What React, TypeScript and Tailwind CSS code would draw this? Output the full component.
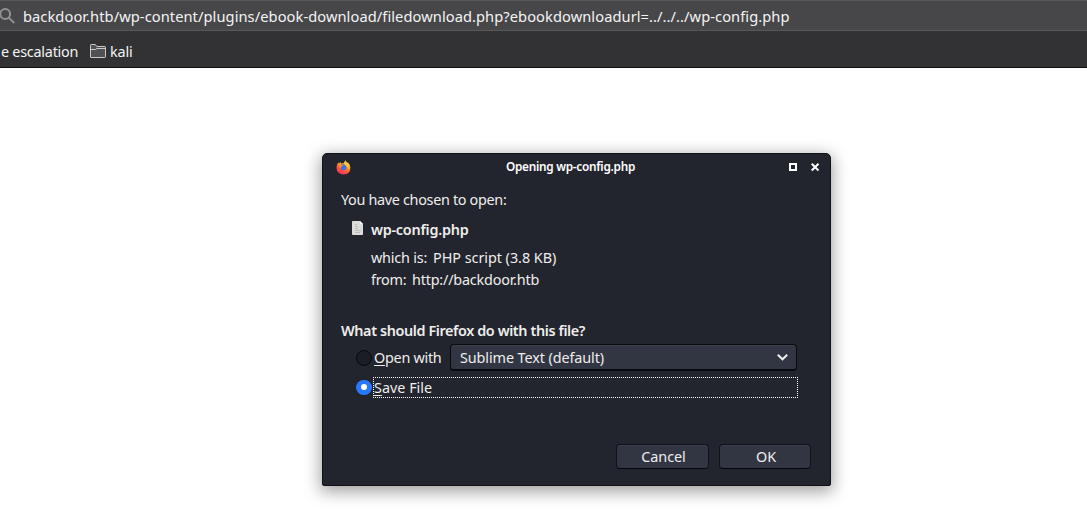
import type { ReactNode } from 'react';

function SearchIcon() {
  return (
    <svg className="-ml-[2px] mt-px block h-[18px] w-[18px] shrink-0" viewBox="0 0 18 18" fill="none" stroke="#929294" strokeWidth="2">
      <circle cx="7.2" cy="7" r="4.9" />
      <path d="M10.8 10.6L16.3 16.1" />
    </svg>
  );
}

function FolderIcon() {
  return (
    <svg className="block h-[14px] w-4 shrink-0" viewBox="0 0 16 14" fill="none" stroke="#c9c9ca">
      <path d="M.5 13V1.2Q.5.5 1.2.5H5.3L6.8 2.5H14.8Q15.5 2.5 15.5 3.2V12.8Q15.5 13.5 14.8 13.5H1Q.5 13.5.5 13Z" fill="#515153" />
      <path d="M.5 5.5H5.5L7 4.5H15.5" />
    </svg>
  );
}

function FirefoxIcon() {
  return (
    <svg className="-mt-px block h-[15px] w-[15px]" viewBox="0 0 15 15">
      <defs>
        <linearGradient id="flame" x1="0.8" y1="0" x2="0.25" y2="1">
          <stop offset="0" stopColor="#fff044" />
          <stop offset="0.35" stopColor="#ffad28" />
          <stop offset="0.65" stopColor="#ff583c" />
          <stop offset="1" stopColor="#ed2864" />
        </linearGradient>
      </defs>
      <path d="M1.2 4.4L2 2.4L3.1 3.6L4.5 1.9L5.2 3.5L8.1 3.1L9.2.3Q10.3 2 11.8 3L12.3 2.7Q14.6 5.2 14.4 8Q14 14.2 7.5 14.6Q1 14.2.5 8.2Q.4 6 1.2 4.4Z" fill="url(#flame)" />
      <path d="M4.5 4.1L7.8 4.2Q10.4 5 10.5 7.5Q10.2 10.2 7.4 10.3Q4.8 10.1 4.4 7.7Z" fill="#3f72dc" />
      <path d="M2.4 5Q4.7 3.4 7.4 5.3L5.8 6.6Q4.7 7 4.8 8.3Q3.2 7.7 2.4 5Z" fill="#ff8a34" />
      <path d="M8.2 4.2L9 1Q12.8 4 11.8 7.8Q10.7 4.9 8.2 4.2Z" fill="#ffc43a" />
    </svg>
  );
}

function FileIcon() {
  return (
    <svg className="block h-[14px] w-[11px] shrink-0" viewBox="0 0 11 14">
      <path d="M0 .7Q0 0 .7 0H8L11 3V13.2Q11 14 10.2 14H.8Q0 14 0 13.2Z" fill="#dcdcdc" />
      <path d="M8 0L11 3H8Z" fill="#fff" />
      <path d="M3 3.5H5M3 5.5H6M3 7.5H6M3 9.5H9M3 11.5H8" stroke="#bdbdbd" />
    </svg>
  );
}

function Button({ children, className }: { children: ReactNode; className: string }) {
  return (
    <button className={`h-[25px] rounded-[4px] border border-b-[#050608] border-[#101218] bg-[#323643] pl-[2px] leading-[23px] shadow-[inset_0_1px_0_#3c404d] ${className}`}>
      {children}
    </button>
  );
}

export default function App() {
  return (
    <div className="h-[516px] w-[1087px] overflow-hidden bg-white font-['Noto_Sans',sans-serif] text-[14.67px] text-[#eeeeec]">
      <header className="h-[68px] border-b border-[#0c0c0d] bg-[#323234] text-[#f4f4f5]">
        <div className="flex h-[31px] items-center border-t border-b border-[#59595b] bg-[#474749]">
          <SearchIcon />
          <span className="ml-[7px] whitespace-nowrap leading-5 tracking-[0.068px]">
            backdoor.htb/wp-content/plugins/ebook-download/filedownload.php?ebookdownloadurl=../../../wp-config.php
          </span>
        </div>
        <nav className="flex h-9 items-center pt-1 text-[14.4px] leading-[22px]">
          <span className="w-[77px] pt-[2px] pl-px tracking-[-0.25px] whitespace-nowrap">e escalation</span>
          <span className="ml-[13px] flex items-center gap-1 tracking-[-0.15px]">
            <FolderIcon />
            <span className="pt-[2px]">kali</span>
          </span>
        </nav>
      </header>

      <main className="pt-[85px] pl-[322px]">
        <section className="h-[333px] w-[509px] rounded-t-[5px] rounded-b-[2px] border border-[#10121a] bg-[#23252e] shadow-[0_4px_16px_2px_rgba(0,0,0,0.36)]">
          <div className="grid h-[26px] grid-cols-[80px_1fr_80px] items-center pt-px">
            <div className="pl-[13px]">
              <FirefoxIcon />
            </div>
            <h1 className="-mt-[2.5px] pr-[12px] text-center text-[11.8px] leading-4 font-semibold tracking-[-0.27px] text-white">Opening wp-config.php</h1>
            <div className="flex items-start justify-end gap-[14px] pr-[10px]">
              <svg className="block h-2 w-2" viewBox="0 0 8 8" fill="none" stroke="#fff" strokeWidth="2">
                <path d="M1 1H7V7H1Z" />
              </svg>
              <svg className="block h-[9px] w-[9px]" viewBox="0 0 9 9" fill="none" stroke="#fff" strokeWidth="2">
                <path d="M.7.7L7.5 7.5M7.5.7L.7 7.5" />
              </svg>
            </div>
          </div>

          <div className="pr-[19px] pl-[18px] text-[14.4px] leading-5">
            <p className="mt-[10px] tracking-[-0.32px]">You have chosen to open:</p>
            <div className="mt-[10px] flex items-center pl-[11px]">
              <div className="-mt-[4px]">
                <FileIcon />
              </div>
              <strong className="ml-2 font-semibold tracking-[-0.23px]">wp-config.php</strong>
            </div>
            <div className="mt-2 ml-[30px] flex">
              <span className="w-[62px] tracking-[-0.2px]">which is:</span>
              <span className="tracking-[-0.04px]">PHP script (3.8 KB)</span>
            </div>
            <div className="mt-[2px] ml-[30px] flex">
              <span className="w-[41px] tracking-[-0.26px]">from:</span>
              <span className="tracking-[-0.2px]">http://backdoor.htb</span>
            </div>
            <p className="mt-[31px] font-semibold tracking-[-0.39px]">What should Firefox do with this file?</p>

            <div className="mt-[3px] flex h-[27px] items-center pl-[15px]">
              <span className="h-4 w-4 shrink-0 rounded-full border border-[#08090c] bg-[#1b1d24]" />
              <span className="ml-[2px] w-[76px] pt-px tracking-[-0.28px]">
                <span className="underline decoration-1 underline-offset-2">O</span>pen with
              </span>
              <div className="flex h-[27px] w-[347px] shrink-0 items-center justify-between rounded-[4px] border border-b-2 border-[#090a0e] bg-[#323643] pr-[8.5px] pl-[9px] shadow-[inset_0_1px_0_#3c404d]">
                <span className="pt-[2px] tracking-[-0.1px]">Sublime Text (default)</span>
                <svg className="block h-[7px] w-[11px]" viewBox="0 0 11 7" fill="none" stroke="#eeeeec" strokeWidth="2">
                  <path d="M.8.8L5.5 5.3L10.2.8" />
                </svg>
              </div>
            </div>

            <div className="mt-[6px] flex h-[21px] items-center pl-[15px]">
              <span className="-mt-px flex h-[15px] w-[16px] shrink-0 items-center justify-center rounded-full bg-[#2777ff]">
                <span className="h-[6px] w-[6px] rounded-full bg-white" />
              </span>
              <span className="ml-px flex h-[21px] w-[425px] shrink-0 items-center border border-dotted border-white">
                <span>
                  <span className="underline decoration-1 underline-offset-2">S</span>ave File
                </span>
              </span>
            </div>

            <div className="mt-[46px] flex justify-end gap-[10px]">
              <Button className="w-[93px] tracking-[-0.05px]">Cancel</Button>
              <Button className="w-[92px]">OK</Button>
            </div>
          </div>
        </section>
      </main>
    </div>
  );
}
